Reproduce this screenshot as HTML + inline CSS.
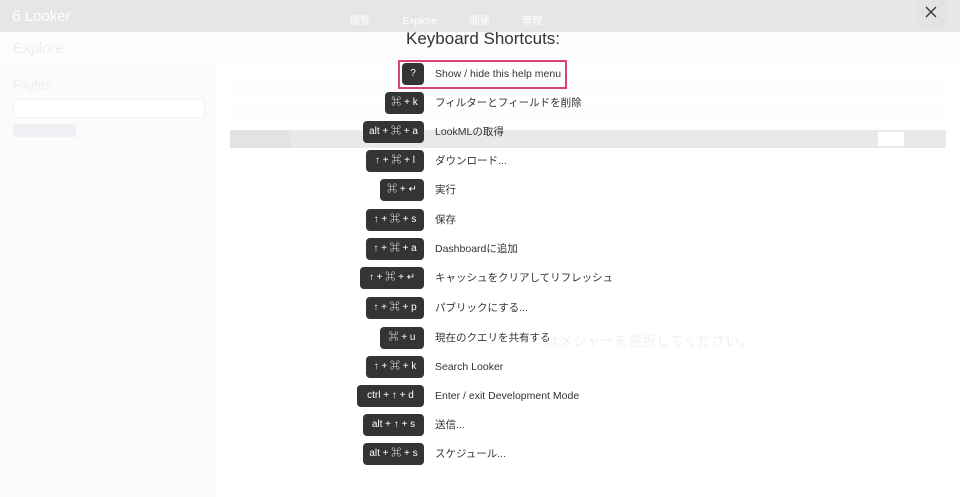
<!DOCTYPE html><html><head><meta charset="utf-8"><style>
body{margin:0;width:960px;height:497px;position:relative;overflow:hidden;background:#fdfdfd;font-family:"Liberation Sans","Noto Sans CJK JP",sans-serif}
.a{position:absolute}
.top{left:0;top:0;width:960px;height:32px;background:#e6e6e6}
.f{color:#eee;font-size:11px}
.k{position:absolute;right:536px;height:22px;background:#343434;border-radius:4px;color:#fff;font-size:10px;line-height:22px;text-align:center}
.t{position:absolute;left:435px;font-size:10.5px;color:#333;line-height:26px}
</style></head><body>
<div class="a top"></div>
<div class="a" style="left:12px;top:8px;color:#fff;font-size:15px">&#1073; Looker</div>
<div class="a" style="left:350px;top:12px;color:#fff;font-size:10px;word-spacing:30px">閲覧 Explore 開発 管理</div>
<div class="a" style="left:918px;top:0;width:28px;height:30px;background:#e3e3e3;border-radius:0 0 4px 4px"></div>
<svg class="a" style="left:925px;top:6px" width="12" height="12"><path d="M1 1L11 11M11 1L1 11" stroke="#333" stroke-width="1.3"/></svg>
<div class="a" style="left:13px;top:40px;font-size:15px;color:#eee">Explore</div>
<div class="a" style="left:0;top:66px;width:216px;height:431px;background:#fbfbfb"></div>
<div class="a f" style="left:13px;top:77px;font-size:13px">Flights</div>
<div class="a" style="left:13px;top:99px;width:190px;height:17px;background:#fff;border:1px solid #f3f3f3"></div>
<div class="a" style="left:13px;top:124px;width:63px;height:13px;background:#f0eff4"></div>
<div class="a" style="left:216px;top:66px;width:744px;height:431px;background:#fff"></div>
<div class="a" style="left:230px;top:79px;width:716px;height:18px;background:#fdfdfd"></div>
<div class="a" style="left:230px;top:105px;width:716px;height:18px;background:#fdfdfd"></div>
<div class="a" style="left:230px;top:130px;width:716px;height:18px;background:#e9e9e9;border-radius:2px"></div>
<div class="a" style="left:230px;top:130px;width:61px;height:18px;background:#e3e3e3"></div>
<div class="a" style="left:878px;top:132px;width:26px;height:14px;background:#fff"></div>
<div class="a" style="left:406px;top:29px;font-size:17px;color:#333">Keyboard Shortcuts:</div>
<div class="a" style="left:398px;top:60px;width:165px;height:25px;border:2px solid #d6437d"></div>
<div class="k" style="top:63px;width:22px">?</div><div class="t" style="top:61px">Show / hide this help menu</div>
<div class="k" style="top:92px;width:39px">⌘ + k</div><div class="t" style="top:90px">フィルターとフィールドを削除</div>
<div class="k" style="top:121px;width:61px">alt + ⌘ + a</div><div class="t" style="top:119px">LookMLの取得</div>
<div class="k" style="top:150px;width:58px">↑ + ⌘ + l</div><div class="t" style="top:148px">ダウンロード...</div>
<div class="k" style="top:179px;width:44px">⌘ + ↵</div><div class="t" style="top:177px">実行</div>
<div class="k" style="top:209px;width:58px">↑ + ⌘ + s</div><div class="t" style="top:207px">保存</div>
<div class="k" style="top:238px;width:58px">↑ + ⌘ + a</div><div class="t" style="top:236px">Dashboardに追加</div>
<div class="k" style="top:267px;width:64px">↑ + ⌘ + ↵</div><div class="t" style="top:265px">キャッシュをクリアしてリフレッシュ</div>
<div class="k" style="top:297px;width:58px">↑ + ⌘ + p</div><div class="t" style="top:295px">パブリックにする...</div>
<div class="k" style="top:327px;width:44px">⌘ + u</div><div class="t" style="top:325px">現在のクエリを共有する</div>
<div class="k" style="top:356px;width:58px">↑ + ⌘ + k</div><div class="t" style="top:354px">Search Looker</div>
<div class="k" style="top:385px;width:67px">ctrl + ↑ + d</div><div class="t" style="top:383px">Enter / exit Development Mode</div>
<div class="k" style="top:414px;width:61px">alt + ↑ + s</div><div class="t" style="top:412px">送信...</div>
<div class="k" style="top:443px;width:61px">alt + ⌘ + s</div><div class="t" style="top:441px">スケジュール...</div>
<div class="a" style="left:545px;top:331px;font-size:14px;color:#f0f0f0">はメジャーを選択してください。</div>
</body></html>
